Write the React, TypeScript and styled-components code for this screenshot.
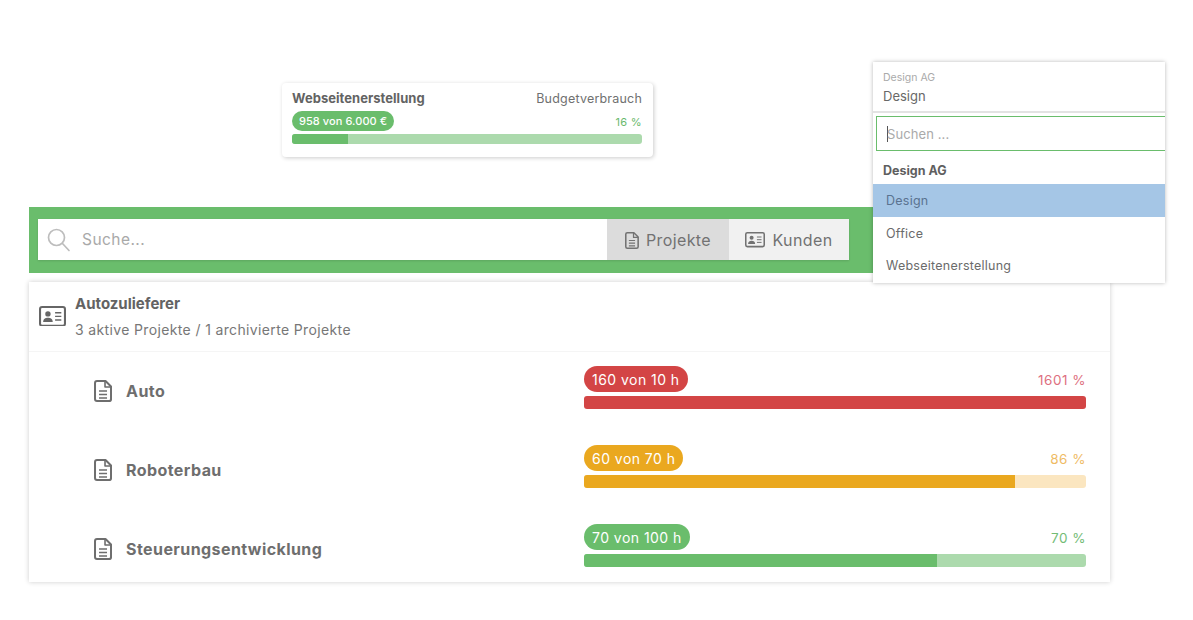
import React from "react";
import styled, { createGlobalStyle } from "styled-components";

const Global = createGlobalStyle`
  html, body { margin: 0; padding: 0; background: #fff; }
  body { font-family: Inter, "Liberation Sans", sans-serif; color: #666; overflow: hidden; }
`;

const GREEN = "#6abd6c";
const GREEN_LIGHT = "#acdaad";
const RED = "#d34545";
const AMBER = "#eaa81f";
const AMBER_LIGHT = "#fbe6c0";

const Canvas = styled.div`
  position: relative;
  width: 1193px;
  height: 620px;
  overflow: hidden;
`;

const BudgetCard = styled.section`
  position: absolute;
  left: 282px;
  top: 83px;
  width: 371px;
  height: 74px;
  box-sizing: border-box;
  padding: 6px 11px 0 10px;
  background: #fff;
  border-radius: 4px;
  box-shadow: 1px 1px 4px rgba(0, 0, 0, 0.2);
`;

const CardTop = styled.div`
  display: flex;
  justify-content: space-between;
  align-items: center;
  height: 18px;
  font-size: 13px;
`;

const CardTitle = styled.strong`
  font-weight: 700;
  letter-spacing: 0.04px;
  color: #636363;
`;

const CardLabel = styled.span`
  font-size: 12.5px;
  letter-spacing: 0.2px;
  color: #707070;
`;

const MeterHead = styled.div<{ $mt: number }>`
  display: flex;
  justify-content: space-between;
  align-items: center;
  margin-top: ${(p) => p.$mt}px;
`;

const Pill = styled.span<{ $bg: string; $small?: boolean }>`
  display: inline-flex;
  align-items: center;
  height: ${(p) => (p.$small ? 20 : 26)}px;
  padding: 0 ${(p) => (p.$small ? 7 : 8)}px;
  border-radius: 13px;
  background: ${(p) => p.$bg};
  color: #fff;
  font-size: ${(p) => (p.$small ? 11 : 14)}px;
  font-weight: ${(p) => (p.$small ? 500 : 400)};
  letter-spacing: ${(p) => (p.$small ? 0.07 : 0.46)}px;
  white-space: nowrap;
`;

const Percent = styled.span<{ $color: string; $small?: boolean }>`
  color: ${(p) => p.$color};
  font-size: ${(p) => (p.$small ? 11 : 13.5)}px;
  letter-spacing: ${(p) => (p.$small ? 0.35 : 0.5)}px;
  opacity: 0.85;
  padding-top: 2px;
`;

const Track = styled.div<{ $bg: string; $h: number; $mt: number }>`
  height: ${(p) => p.$h}px;
  margin-top: ${(p) => p.$mt}px;
  border-radius: 3px;
  background: ${(p) => p.$bg};
  overflow: hidden;
`;

const Fill = styled.div<{ $bg: string }>`
  height: 100%;
  background: ${(p) => p.$bg};
`;

const SearchWindow = styled.section`
  position: absolute;
  left: 29px;
  top: 207px;
  width: 1081px;
`;

const GreenBar = styled.div`
  height: 66px;
  box-sizing: border-box;
  padding: 12px 261px 13px 9px;
  background: ${GREEN};
`;

const SearchBox = styled.div`
  display: flex;
  height: 41px;
  background: #fff;
  box-shadow: 0 1px 2px rgba(0, 0, 0, 0.12);
`;

const SearchField = styled.div`
  flex: 1;
  display: flex;
  align-items: center;
  gap: 11px;
  padding-left: 9px;
  color: #a9a9a9;
  font-size: 15.5px;
  letter-spacing: 0.45px;
  svg { color: #bdbdbd; }
`;

const ToggleButton = styled.div<{ $active?: boolean; $w: number }>`
  width: ${(p) => p.$w}px;
  box-sizing: border-box;
  padding-top: 1px;
  display: flex;
  align-items: center;
  justify-content: center;
  gap: 7px;
  background: ${(p) => (p.$active ? "#dcdcdc" : "#f1f1f1")};
  color: #727272;
  font-size: 16px;
  letter-spacing: 0.4px;
`;

const Panel = styled.div`
  margin-top: 9px;
  height: 300px;
  background: #fff;
  box-shadow: 0 0 5px rgba(0, 0, 0, 0.2);
`;

const CustomerRow = styled.div`
  height: 70px;
  box-sizing: border-box;
  display: flex;
  align-items: center;
  gap: 9px;
  padding: 0 0 1px 10px;
  border-bottom: 1px solid #f5f5f5;
`;

const CustomerText = styled.div`
  display: flex;
  flex-direction: column;
  gap: 8px;
`;

const CustomerName = styled.strong`
  font-size: 15px;
  font-weight: 700;
  color: #636363;
`;

const CustomerMeta = styled.span`
  font-size: 14px;
  letter-spacing: 0.36px;
  color: #777;
`;

const ProjectList = styled.div`
  display: flex;
  flex-direction: column;
  gap: 36px;
  padding: 14px 24px 0 63px;
`;

const ProjectRow = styled.div`
  display: flex;
  align-items: center;
  height: 43px;
`;

const ProjectName = styled.div`
  width: 492px;
  box-sizing: border-box;
  padding: 7px 0 0 2px;
  display: flex;
  align-items: center;
  gap: 14px;
  font-size: 16px;
  font-weight: 700;
  letter-spacing: 0.42px;
  color: #6e6e6e;
  svg { color: #6e6e6e; flex: none; }
`;

const Meter = styled.div`
  flex: 1;
`;

const Dropdown = styled.section`
  position: absolute;
  left: 873px;
  top: 62px;
  width: 292px;
  height: 221px;
  background: #fff;
  box-shadow: 0 0 4px rgba(0, 0, 0, 0.28);
`;

const Selected = styled.div`
  height: 51px;
  box-sizing: border-box;
  padding: 9px 10px 0;
  border-bottom: 2px solid #e3e3e3;
`;

const SelectedGroup = styled.div`
  font-size: 10.5px;
  line-height: 13px;
  color: #aaa;
`;

const SelectedValue = styled.div`
  margin-top: 3.5px;
  font-size: 13px;
  line-height: 16px;
  color: #686868;
`;

const DropdownSearch = styled.div`
  display: flex;
  align-items: center;
  height: 35px;
  box-sizing: border-box;
  margin: 3px 0 0 3px;
  padding-left: 10px;
  border: 1px solid ${GREEN};
  border-right: 0;
  font-size: 13px;
  letter-spacing: 0.1px;
  color: #aaa;
`;

const Caret = styled.span`
  width: 1px;
  height: 16px;
  margin-right: -1px;
  background: #555;
`;

const GroupLabel = styled.div`
  margin-top: 10px;
  height: 23px;
  padding-left: 10px;
  font-size: 12.5px;
  line-height: 20px;
  font-weight: 700;
  color: #5f5f5f;
`;

const Option = styled.div<{ $active?: boolean }>`
  height: ${(p) => (p.$active ? 33 : 32)}px;
  display: flex;
  align-items: center;
  padding-left: 13px;
  font-size: 12.5px;
  letter-spacing: 0.25px;
  color: ${(p) => (p.$active ? "#5a7390" : "#6b6b6b")};
  background: ${(p) => (p.$active ? "#a5c6e6" : "transparent")};
`;

const DocIcon = ({ size = 22 }: { size?: number }) => (
  <svg width={size * 0.82} height={size} viewBox="0 0 18 22" fill="none" stroke="currentColor" strokeWidth="2" strokeLinejoin="round" strokeLinecap="round">
    <path d="M3 1h8.5L17 6.5V19a2 2 0 0 1-2 2H3a2 2 0 0 1-2-2V3a2 2 0 0 1 2-2z" />
    <path d="M11 1.5V7h5.5" strokeWidth="1.6" />
    <path d="M5 11h8M5 14.5h8M5 18h8" strokeWidth="1.6" strokeLinecap="butt" />
  </svg>
);

const CardIcon = ({ width = 26 }: { width?: number }) => (
  <svg width={width} height={width * 0.77} viewBox="0 0 26 20" fill="none" stroke="currentColor">
    <rect x="1" y="1" width="24" height="18" rx="2" strokeWidth="2" />
    <circle cx="8.6" cy="7.6" r="2.6" fill="currentColor" stroke="none" />
    <path d="M4 15.5c0-3 2.1-4.2 4.6-4.2s4.6 1.2 4.6 4.2z" fill="currentColor" stroke="none" />
    <path d="M15.5 6.5h6M15.5 10h6M15.5 13.5h6" strokeWidth="1.3" />
  </svg>
);

const SearchIcon = () => (
  <svg width="24" height="24" viewBox="0 0 24 24" fill="none" stroke="currentColor" strokeWidth="1.7" strokeLinecap="round">
    <circle cx="9.5" cy="9.5" r="8" />
    <path d="M15.5 15.5l6.5 7" />
  </svg>
);

const projects = [
  { name: "Auto", pill: "160 von 10 h", percent: "1601 %", value: 100, color: RED, track: RED, pctColor: "#d9566a" },
  { name: "Roboterbau", pill: "60 von 70 h", percent: "86 %", value: 85.9, color: AMBER, track: AMBER_LIGHT, pctColor: "#edb04a" },
  { name: "Steuerungsentwicklung", pill: "70 von 100 h", percent: "70 %", value: 70.4, color: GREEN, track: GREEN_LIGHT, pctColor: "#5bb15e" },
];

export default function App() {
  return (
    <Canvas>
      <Global />
      <BudgetCard>
        <CardTop>
          <CardTitle>Webseitenerstellung</CardTitle>
          <CardLabel>Budgetverbrauch</CardLabel>
        </CardTop>
        <MeterHead $mt={4}>
          <Pill $bg={GREEN} $small>958 von 6.000 €</Pill>
          <Percent $color="#4fae52" $small>16 %</Percent>
        </MeterHead>
        <Track $bg={GREEN_LIGHT} $h={10} $mt={3}>
          <Fill $bg={GREEN} style={{ width: "16%" }} />
        </Track>
      </BudgetCard>

      <SearchWindow>
        <GreenBar>
          <SearchBox>
            <SearchField>
              <SearchIcon />
              Suche...
            </SearchField>
            <ToggleButton $active $w={122}>
              <DocIcon size={17} />
              Projekte
            </ToggleButton>
            <ToggleButton $w={120}>
              <CardIcon width={20} />
              Kunden
            </ToggleButton>
          </SearchBox>
        </GreenBar>
        <Panel>
          <CustomerRow>
            <CardIcon width={27} />
            <CustomerText>
              <CustomerName>Autozulieferer</CustomerName>
              <CustomerMeta>3 aktive Projekte / 1 archivierte Projekte</CustomerMeta>
            </CustomerText>
          </CustomerRow>
          <ProjectList>
            {projects.map((p) => (
              <ProjectRow key={p.name}>
                <ProjectName>
                  <DocIcon size={22} />
                  {p.name}
                </ProjectName>
                <Meter>
                  <MeterHead $mt={0}>
                    <Pill $bg={p.color}>{p.pill}</Pill>
                    <Percent $color={p.pctColor}>{p.percent}</Percent>
                  </MeterHead>
                  <Track $bg={p.track} $h={13} $mt={4}>
                    <Fill $bg={p.color} style={{ width: `${p.value}%` }} />
                  </Track>
                </Meter>
              </ProjectRow>
            ))}
          </ProjectList>
        </Panel>
      </SearchWindow>

      <Dropdown>
        <Selected>
          <SelectedGroup>Design AG</SelectedGroup>
          <SelectedValue>Design</SelectedValue>
        </Selected>
        <DropdownSearch>
          <Caret />
          Suchen ...
        </DropdownSearch>
        <GroupLabel>Design AG</GroupLabel>
        <Option $active>Design</Option>
        <Option>Office</Option>
        <Option>Webseitenerstellung</Option>
      </Dropdown>
    </Canvas>
  );
}
